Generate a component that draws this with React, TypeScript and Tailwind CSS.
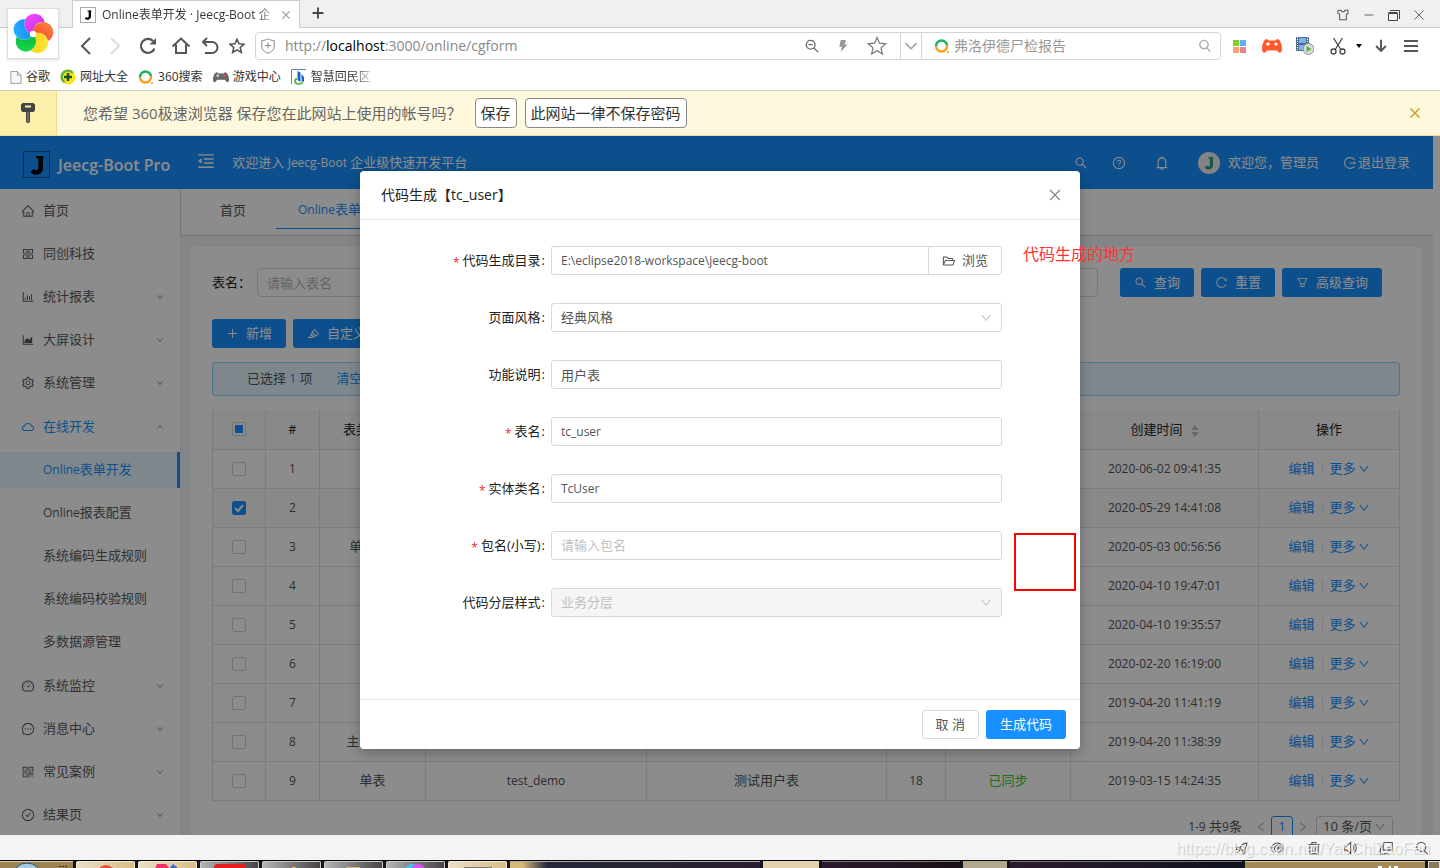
import React from "react";
import {
  AiOutlineAppstore,
  AiOutlineAreaChart,
  AiOutlineBarChart,
  AiOutlineBell,
  AiOutlineCheckCircle,
  AiOutlineClose,
  AiOutlineCloud,
  AiOutlineDashboard,
  AiOutlineDown,
  AiOutlineFilter,
  AiOutlineFolderOpen,
  AiOutlineHighlight,
  AiOutlineHome,
  AiOutlineLeft,
  AiOutlineLogout,
  AiOutlineMenuFold,
  AiOutlineMessage,
  AiOutlinePlus,
  AiOutlineQrcode,
  AiOutlineQuestionCircle,
  AiOutlineReload,
  AiOutlineRight,
  AiOutlineSearch,
  AiOutlineSetting,
  AiOutlineSkin,
  AiOutlineUp,
} from "react-icons/ai";

type IconType = React.ComponentType<{ className?: string }>;

/* ---------- browser chrome ---------- */

function Stroke({
  d,
  size = "size-5",
  color = "text-[#555]",
  width = 2,
}: {
  d: string;
  size?: string;
  color?: string;
  width?: number;
}) {
  return (
    <svg viewBox="0 0 20 20" className={`${size} ${color} shrink-0`} fill="none" stroke="currentColor" strokeWidth={width}>
      <path d={d} />
    </svg>
  );
}

const STAR = "M10 1.500l2.500 5.700 6.200.6-4.700 4.100 1.400 6.100L10 14.800l-5.400 3.200L6 11.900 1.300 7.800l6.200-.6z";

function PinwheelLogo() {
  const petals = [
    { id: "top", from: "#ff4bff", to: "#b52ee0", angle: 8 },
    { id: "right", from: "#ff8a3c", to: "#f0402c", angle: 80 },
    { id: "bottom", from: "#ffef3a", to: "#f8c414", angle: 152 },
    { id: "lower", from: "#18e04f", to: "#08a83c", angle: 224 },
    { id: "upper", from: "#22b8ff", to: "#1a7df0", angle: 296 },
  ];
  return (
    <svg viewBox="-21 -21 42 42" className="size-[42px]">
      <defs>
        {petals.map((p) => (
          <linearGradient key={p.id} id={`petal-${p.id}`} x1="0" y1="0" x2="1" y2="1">
            <stop offset="0" stopColor={p.from} />
            <stop offset="1" stopColor={p.to} />
          </linearGradient>
        ))}
      </defs>
      {petals.map((p) => (
        <path
          key={p.id}
          fill={`url(#petal-${p.id})`}
          transform={`rotate(${p.angle})`}
          d="M0 0A10.200 10.200 0 1 1 9.700 -13.350A10.200 10.200 0 0 0 0 0Z"
        />
      ))}
      <circle r="3.200" fill="#fff" />
    </svg>
  );
}

function JMark({ className }: { className?: string }) {
  return (
    <svg viewBox="0 0 26 26" className={className} fill="none" stroke="currentColor">
      <path d="M12 4.500h8" strokeWidth="2.500" />
      <path d="M17 4v12.500c0 4.500-6 6-9.500 2.500" strokeWidth="5" />
    </svg>
  );
}

function RingLogo({ className }: { className?: string }) {
  return (
    <svg viewBox="0 0 16 16" className={className} fill="none" strokeWidth="2.500">
      <path d="M2 8.500a5.500 5.500 0 0 1 11-1" stroke="#1bb35c" />
      <path d="M2 8.500a5.500 5.500 0 0 0 11-1" stroke="#f6a21c" />
      <circle cx="14" cy="14" r="1" fill="#f6a21c" />
    </svg>
  );
}

function TabStrip() {
  return (
    <div className="flex h-7 items-end border-b border-[#ccc] bg-[#f0f0f0] pl-[72px]">
      <div className="-mb-px flex h-7 w-[228px] items-center border border-b-0 border-[#ccc] bg-white pl-[7px]">
        <span className="flex size-4 shrink-0 items-center justify-center border border-[#aaa]">
          <JMark className="size-3 text-black" />
        </span>
        <span className="ml-1.5 w-[174px] overflow-hidden bg-linear-to-r from-[#333] from-90% to-transparent bg-clip-text text-xs whitespace-nowrap text-transparent">
          Online表单开发 · Jeecg-Boot 企
        </span>
        <button aria-label="关闭标签页" className="ml-1">
          <Stroke d="M4 4l12 12M16 4L4 16" size="size-3" color="text-[#999]" width={2} />
        </button>
      </div>
      <button aria-label="新标签页" className="mb-2 ml-3">
        <Stroke d="M10 1v18M1 10h18" size="size-3" color="text-[#444]" width={3} />
      </button>
      <div className="mb-[5px] ml-auto flex items-center gap-[14px] pr-4 text-[#555]">
        <AiOutlineSkin className="size-3.5" />
        <Stroke d="M1 10h18" size="size-2.5" color="text-[#666]" />
        <svg viewBox="0 0 12 12" className="size-3" fill="none" stroke="#444">
          <path d="M.5 4.500h9v7h-9zM.5 3.500h9M2 1.500h9.500V10" />
        </svg>
        <Stroke d="M1 1l18 18M19 1L1 19" size="size-2.5" color="text-[#666]" />
      </div>
    </div>
  );
}

function Toolbar() {
  return (
    <div className="flex h-9 items-center pr-[22px] pl-[76px]">
      <div className="flex items-center gap-[9px]">
        <button aria-label="后退"><Stroke d="M14 2l-8 8 8 8" size="size-5" /></button>
        <button aria-label="前进"><Stroke d="M6 2l8 8-8 8" size="size-5" color="text-[#ddd]" /></button>
        <button aria-label="刷新" className="ml-1">
          <svg viewBox="0 0 20 20" className="size-5" fill="none" stroke="#555" strokeWidth="2.200">
            <path d="M16.500 12.500A7 7 0 1 1 15 5" />
            <path d="M18 2v6.500h-6.500z" fill="#555" stroke="none" />
          </svg>
        </button>
        <button aria-label="主页" className="ml-1"><Stroke d="M1.500 10.500L10 2.500l8.500 8M5 8.500V17h10V8.500" /></button>
        <button aria-label="恢复"><Stroke d="M7 2L3 6l4 4M3 6h9a5.500 5.500 0 0 1 0 11H5" /></button>
        <button aria-label="收藏"><Stroke d={STAR} size="size-4" /></button>
      </div>
      <div className="ml-2.5 flex h-7 flex-1 items-center rounded-sm border border-[#d5d5d5]">
        <svg viewBox="0 0 16 16" className="ml-1 size-4 shrink-0" fill="none" stroke="#888">
          <path d="M8 .8C6 2 4 2.500 1.800 2.500V8c0 4 3 6 6.200 7.300C11.200 14 14.200 12 14.200 8V2.500C12 2.500 10 2 8 .8zM8 4.500v6M5 7.500h6" />
        </svg>
        <span className="ml-[9px] text-sm text-[#888]">
          http://<span className="text-black">localhost</span>:3000/online/cgform
        </span>
        <span className="ml-auto flex items-center gap-[18px] pr-[13px]">
          <svg viewBox="0 0 16 16" className="size-3.5" fill="none" stroke="#666" strokeWidth="1.500">
            <path d="M6.500 1.500a5 5 0 1 1 0 10 5 5 0 0 1 0-10M10.200 10.200l4.800 4.800M4 6.500h5" />
          </svg>
          <svg viewBox="0 0 16 16" className="size-3" fill="#999"><path d="M5 0h7L10 6h4L5 16l1.500-7H3z" /></svg>
          <Stroke d={STAR} size="size-5" color="text-[#777]" width={1.2} />
        </span>
        <span className="flex h-full w-[22px] items-center justify-center border-x border-[#d5d5d5]">
          <Stroke d="M2 6l8 8 8-8" size="size-3.5" color="text-[#aaa]" width={2.5} />
        </span>
        <RingLogo className="ml-3 size-4 shrink-0" />
        <input
          aria-label="搜索"
          placeholder="弗洛伊德尸检报告"
          className="ml-1 w-60 min-w-0 text-sm outline-none placeholder:text-[#999]"
        />
        <span className="mr-2 ml-1">
          <Stroke d="M8.500 2a6 6 0 1 1 0 12 6 6 0 0 1 0-12M13 13l4.500 5" size="size-3.5" color="text-[#aaa]" />
        </span>
      </div>
      <div className="ml-3 flex items-center">
        <span className="grid size-[13px] grid-cols-2 gap-px">
          <i className="bg-[#7ed321]" /><i className="bg-[#5bb0ff]" /><i className="bg-[#ffa270]" /><i className="bg-[#f08090]" />
        </span>
        <svg viewBox="0 0 20 16" className="ml-4 h-4 w-5">
          <path fill="#ff5a2c" d="M5 1l2 1.500h6L15 1c3 0 5 5 5 10 0 4-3 5-5 1.500H5C3 16 0 15 0 11 0 6 2 1 5 1z" />
          <path d="M6 4v4M4 6h4" stroke="#fff" strokeWidth="1.300" />
          <circle cx="14" cy="6" r="1.500" fill="#fff" />
        </svg>
        <svg viewBox="0 0 18 18" className="ml-3.5 size-[18px]">
          <path fill="#4d6a8c" d="M0 0h13v14H0z" />
          <path fill="#7fb2e8" d="M3 1h7v5H3zM3 8h7v5H3z" />
          <path stroke="#fff" strokeDasharray="1 1" d="M1.500 0v14M11.500 0v14" />
          <circle cx="12.500" cy="12" r="5.500" fill="#d5dade" stroke="#8a9299" />
          <path fill="#5ab031" d="M10.500 9v6l5-3z" />
        </svg>
        <svg viewBox="0 0 16 18" className="ml-4 h-[18px] w-4" fill="none" stroke="#444" strokeWidth="1.300">
          <path d="M3.500 1l7 11M12.500 1l-7 11" />
          <circle cx="3.500" cy="14.500" r="2.500" /><circle cx="12.500" cy="14.500" r="2.500" />
        </svg>
        <svg viewBox="0 0 6 4" className="ml-2.5 h-1 w-1.5"><path d="M0 0h6L3 4z" /></svg>
        <span className="ml-3"><Stroke d="M10 1v16M3 10l7 7 7-7" size="size-3.5" width={2.8} /></span>
        <span className="ml-4"><Stroke d="M0 3h20M0 10h20M0 17h20" size="size-3.5" width={2.8} /></span>
      </div>
    </div>
  );
}

function Bookmarks() {
  const link = "flex items-center gap-1 text-xs text-[#333]";
  return (
    <nav className="flex h-[27px] items-center gap-2.5 border-b border-[#ccc] pl-2.5">
      <a href="#" className={link}>
        <svg viewBox="0 0 12 14" className="h-[13px] w-3" fill="#f6f6f6" stroke="#999">
          <path d="M.5.5h7l4 4v9H.5zM7.500.5v4h4" />
        </svg>
        谷歌
      </a>
      <a href="#" className={link}>
        <svg viewBox="0 0 16 16" className="size-4">
          <circle cx="8" cy="8" r="7.500" fill="#ffe11a" /><path d="M.5 8a7.500 7.500 0 0 1 13-5L4 14A7.500 7.500 0 0 1 .5 8z" fill="#5cb531" />
          <circle cx="8" cy="8" r="5.200" fill="#ffe11a" /><path d="M8 4v8M4 8h8" stroke="#14532d" strokeWidth="2.600" />
        </svg>
        网址大全
      </a>
      <a href="#" className={link}><RingLogo className="size-4" />360搜索</a>
      <a href="#" className={link}>
        <svg viewBox="0 0 20 16" className="size-4">
          <path fill="#666" d="M5 2l2 1.500h6L15 2c3 0 5 5 5 9 0 4-3 5-5 .5H5C3 16 0 15 0 11 0 7 2 2 5 2z" />
          <path d="M6 4.500v4M4 6.500h4" stroke="#b9f2c0" strokeWidth="1.300" /><circle cx="14" cy="6.500" r="1.800" fill="#e05050" />
        </svg>
        游戏中心
      </a>
      <a href="#" className={link}>
        <svg viewBox="0 0 16 16" className="size-4">
          <path d="M.5 15V.5H15" stroke="#5a84b8" fill="none" /><path fill="#1b63c4" d="M6.500 2l3 1.500V13l-3-2zM10.500 5l2.500 3v5l-2.500-1z" />
          <path d="M12 13.500c-4 2.500-8 1.500-8-1.500 0-1 1-2 2-2" stroke="#57b947" strokeWidth="1.800" fill="none" />
        </svg>
        <span className="bg-linear-to-r from-[#333] from-70% to-[#ddd] bg-clip-text text-transparent">智慧回民区</span>
      </a>
    </nav>
  );
}

function PasswordBar() {
  const btn = "ml-2 h-[30px] rounded-sm border border-[#888] bg-white px-[5px] text-[15px] text-[#333]";
  return (
    <div className="flex h-[45px] items-center border-b border-[#eedf9a] bg-[#fef8dc]">
      <span className="flex h-full w-[57px] items-center justify-center border-r border-[#f2dc8c] bg-[#fcf0ab]">
        <svg viewBox="0 0 14 20" className="h-5 w-3.5">
          <path fill="#444" d="M1.500 0h11L14 1.500v6L12.500 9H9v9.500L8 20H6l-1-1.500V9H1.500L0 7.500v-6z" /><path fill="#fcf0ab" d="M4 2.500h6v2H4z" />
          <path stroke="#999" d="M7 9v10" />
        </svg>
      </span>
      <span className="mr-[5px] ml-[26px] text-[15px] text-[#666]">您希望 360极速浏览器 保存您在此网站上使用的帐号吗？</span>
      <button className={btn}>保存</button>
      <button className={btn}>此网站一律不保存密码</button>
      <button aria-label="关闭提示" className="mr-5 ml-auto">
        <Stroke d="M1 1l18 18M19 1L1 19" size="size-2.5" color="text-[#c8961e]" width={2.5} />
      </button>
    </div>
  );
}

/* ---------- application page ---------- */

function AppHeader() {
  return (
    <header className="flex h-[53px] items-center bg-[#1890ff] pr-[23px] pl-[23px] text-[13px] text-white">
      <span className="mt-1 flex size-[27px] items-center justify-center border border-[#175491]">
        <JMark className="size-6 text-black" />
      </span>
      <h1 className="mt-1 ml-2 text-base font-semibold">Jeecg-Boot Pro</h1>
      <AiOutlineMenuFold className="mb-1 ml-[26px] size-5" />
      <span className="ml-4">欢迎进入 <span className="text-xs">Jeecg-Boot</span> 企业级快速开发平台</span>
      <div className="ml-auto flex items-center">
        <AiOutlineSearch className="size-3.5" />
        <AiOutlineQuestionCircle className="ml-6 size-3.5" />
        <AiOutlineBell className="ml-7 size-4" />
        <span className="ml-7 flex size-[22px] items-center justify-center rounded-full bg-[#eee]">
          <JMark className="size-4 text-[#27a58c]" />
        </span>
        <span className="ml-2">欢迎您，管理员</span>
        <a href="#" className="ml-6 flex items-center gap-px">
          <AiOutlineLogout className="size-3.5" />退出登录
        </a>
      </div>
    </header>
  );
}

function NavItem({ icon: Icon, label, arrow, active }: { icon: IconType; label: string; arrow?: "up" | "down"; active?: boolean }) {
  return (
    <a href="#" className={`flex h-9 items-center gap-2 pr-4 pl-[21px] ${active ? "text-[#1890ff]" : "text-[#5a5a5a]"}`}>
      <Icon className="size-3.5" />
      {label}
      {arrow === "down" && <AiOutlineDown className="ml-auto size-2 text-[#888]" />}
      {arrow === "up" && <AiOutlineUp className="ml-auto size-2 text-[#888]" />}
    </a>
  );
}

function Sidebar() {
  const sub = ["系统编码生成规则", "系统编码校验规则", "多数据源管理"];
  return (
    <aside className="flex w-[180px] shrink-0 flex-col gap-[7px] bg-white pt-1 text-[13px]">
      <NavItem icon={AiOutlineHome} label="首页" />
      <NavItem icon={AiOutlineAppstore} label="同创科技" />
      <NavItem icon={AiOutlineBarChart} label="统计报表" arrow="down" />
      <NavItem icon={AiOutlineAreaChart} label="大屏设计" arrow="down" />
      <NavItem icon={AiOutlineSetting} label="系统管理" arrow="down" />
      <div className="flex flex-col gap-[7px] py-px">
        <NavItem icon={AiOutlineCloud} label="在线开发" arrow="up" active />
        <a href="#" className="flex h-9 items-center border-r-[3px] border-[#1890ff] bg-[#e6f7ff] pl-[43px] text-[#1890ff]">
          <span><span className="text-xs">Online</span>表单开发</span>
        </a>
        <a href="#" className="flex h-9 items-center pl-[43px] text-[#5a5a5a]">
          <span><span className="text-xs">Online</span>报表配置</span>
        </a>
        {sub.map((s) => (
          <a key={s} href="#" className="flex h-9 items-center pl-[43px] text-[#5a5a5a]">{s}</a>
        ))}
      </div>
      <NavItem icon={AiOutlineDashboard} label="系统监控" arrow="down" />
      <NavItem icon={AiOutlineMessage} label="消息中心" arrow="down" />
      <NavItem icon={AiOutlineQrcode} label="常见案例" arrow="down" />
      <NavItem icon={AiOutlineCheckCircle} label="结果页" arrow="down" />
    </aside>
  );
}

function PrimaryButton({ icon: Icon, children }: { icon?: IconType; children: React.ReactNode }) {
  return (
    <button className="flex h-[29px] items-center gap-[7px] rounded-[3px] bg-[#1890ff] px-3.5 text-[13px] whitespace-nowrap text-white">
      {Icon && <Icon className="size-[13px]" />}
      {children}
    </button>
  );
}

function Check({ label, state }: { label: string; state: "on" | "off" | "partial" }) {
  return (
    <label className="mx-auto grid w-3.5 place-items-center">
      <input
        type="checkbox"
        aria-label={label}
        defaultChecked={state === "on"}
        className="col-start-1 row-start-1 size-3.5 appearance-none rounded-xs border border-[#d0d0d0] bg-white checked:border-[#1890ff] checked:bg-[#1890ff]"
      />
      {state === "on" && (
        <svg viewBox="0 0 14 14" className="col-start-1 row-start-1 size-3.5" fill="none" stroke="#fff" strokeWidth="2">
          <path d="M3 7l3 3 5-6" />
        </svg>
      )}
      {state === "partial" && <span className="col-start-1 row-start-1 size-2 bg-[#1890ff]" />}
    </label>
  );
}

type Row = { kind?: string; name?: string; desc?: string; version?: string; status?: string; created: string };

const rows: Row[] = [
  { created: "2020-06-02 09:41:35" },
  { created: "2020-05-29 14:41:08" },
  { kind: "单表(树)", created: "2020-05-03 00:56:56" },
  { created: "2020-04-10 19:47:01" },
  { created: "2020-04-10 19:35:57" },
  { created: "2020-02-20 16:19:00" },
  { created: "2019-04-20 11:41:19" },
  { kind: "主表单表", created: "2019-04-20 11:38:39" },
  { kind: "单表", name: "test_demo", desc: "测试用户表", version: "18", status: "已同步", created: "2019-03-15 14:24:35" },
];

function DataTable() {
  const head = "border border-t-0 border-[#e2e2e2] p-0 font-normal";
  const cell = "border border-[#e2e2e2] p-0";
  return (
    <table className="mt-3.5 w-full table-fixed border-collapse text-center text-[13px] text-[#555]">
      <colgroup>
        <col className="w-[53px]" />
        <col className="w-[54px]" />
        <col className="w-[106px]" />
        <col className="w-[221px]" />
        <col />
        <col className="w-[59px]" />
        <col className="w-[125px]" />
        <col className="w-[188px]" />
        <col className="w-[141px]" />
      </colgroup>
      <thead>
        <tr className="h-[39px] bg-[#fafafa] text-[#222]">
          <th className={head}><Check label="全选" state="partial" /></th>
          <th className={head}><span className="text-xs font-medium">#</span></th>
          <th className={head}><span className="pr-5">表类型</span></th>
          <th className={head} />
          <th className={head} />
          <th className={head} />
          <th className={head} />
          <th className={head}>
            <span className="inline-flex items-center gap-2">
              创建时间
              <svg viewBox="0 0 8 12" className="mt-1 h-3 w-2" fill="#bfbfbf"><path d="M0 5h8L4 0zM0 7h8l-4 5z" /></svg>
            </span>
          </th>
          <th className={head}>操作</th>
        </tr>
      </thead>
      <tbody>
        {rows.map((r, i) => (
          <tr key={r.created} className={i === 1 ? "h-[39px] bg-[#fafafa]" : "h-[39px]"}>
            <td className={cell}><Check label={`选择第 ${i + 1} 行`} state={i === 1 ? "on" : "off"} /></td>
            <td className={`${cell} text-xs`}>{i + 1}</td>
            <td className={cell}>{r.kind}</td>
            <td className={`${cell} text-xs`}>{r.name}</td>
            <td className={cell}>{r.desc}</td>
            <td className={`${cell} text-xs`}>{r.version}</td>
            <td className={`${cell} text-[#32cd32]`}>{r.status}</td>
            <td className={`${cell} text-xs`}>{r.created}</td>
            <td className={cell}>
              <span className="flex items-center justify-center text-[#1890ff]">
                <a href="#">编辑</a>
                <span className="mx-[7px] h-3 w-px bg-[#e2e2e2]" />
                <a href="#" className="flex items-center gap-0.5">更多<AiOutlineDown className="size-3" /></a>
              </span>
            </td>
          </tr>
        ))}
      </tbody>
    </table>
  );
}

function Content() {
  return (
    <main className="flex min-w-0 flex-1 flex-col bg-[#f0f2f5]">
      <div className="flex h-[47px] shrink-0 items-start gap-2 border-b border-l border-[#d4d4d4] bg-white pl-[17px] text-[13px]">
        <a href="#" className="flex h-10 items-center px-[22px] pt-[3px] text-[#555]">首页</a>
        <a href="#" className="flex h-10 items-center border-b border-[#1890ff] px-[22px] pt-[3px] text-[#1890ff]">
          <span><span className="text-xs">Online</span>表单开发</span>
        </a>
      </div>
      <div className="mx-[11px] mt-[11px] flex-1 rounded-t-sm bg-white pt-[21px] pr-[22px] pl-[21px]">
        <div className="flex items-center text-[13px]">
          <label htmlFor="filter-name" className="w-[45px] text-[#222]">表名：</label>
          <input
            id="filter-name"
            placeholder="请输入表名"
            className="h-[29px] min-w-0 flex-1 rounded-sm border border-[#d9d9d9] px-[9px] placeholder:text-[#b5b5b5]"
          />
          <div className="mr-[18px] ml-[22px] flex gap-[7px]">
            <PrimaryButton icon={AiOutlineSearch}>查询</PrimaryButton>
            <PrimaryButton icon={AiOutlineReload}>重置</PrimaryButton>
            <PrimaryButton icon={AiOutlineFilter}>高级查询</PrimaryButton>
          </div>
        </div>
        <div className="mt-[22px] flex gap-[7px]">
          <PrimaryButton icon={AiOutlinePlus}>新增</PrimaryButton>
          <PrimaryButton icon={AiOutlineHighlight}>自定义按钮</PrimaryButton>
        </div>
        <div className="mt-3.5 flex h-[34px] items-center rounded-[3px] border border-[#91d5ff] bg-[#e6f7ff] pl-[34px] text-[13px] text-[#555]">
          已选择<span className="mx-[3px] font-medium text-[#1890ff]">1</span>项
          <a href="#" className="ml-6 text-[#1890ff]">清空</a>
        </div>
        <DataTable />
        <div className="mt-[15px] mr-[7px] flex h-[22px] items-center justify-end text-[13px] text-[#555]">
          <span className="mr-[13px]"><span className="text-xs">1-9</span> 共<span className="text-xs">9</span>条</span>
          <button aria-label="上一页"><AiOutlineLeft className="size-3 text-[#aaa]" /></button>
          <button className="mx-1 flex size-[22px] items-center justify-center rounded-[3px] border border-[#1890ff] text-[#1890ff]">1</button>
          <button aria-label="下一页"><AiOutlineRight className="size-3 text-[#aaa]" /></button>
          <span className="ml-[7px] grid w-[77px] items-center">
            <select aria-label="每页条数" className="col-start-1 row-start-1 h-[22px] appearance-none rounded-[3px] border border-[#d0d0d0] px-1.5 text-[13px]">
              <option>10 条/页</option>
            </select>
            <AiOutlineDown className="pointer-events-none col-start-1 row-start-1 mr-[7px] size-3 justify-self-end text-[#aaa]" />
          </span>
        </div>
      </div>
    </main>
  );
}

/* ---------- dialog ---------- */

const FIELD = "h-[29px] w-full rounded-[3px] border border-[#d9d9d9] bg-white px-[9px] text-xs text-[#555] placeholder:text-[13px] placeholder:text-[#bfbfbf]";

function Field({ id, label, required, children }: { id: string; label: string; required?: boolean; children: React.ReactNode }) {
  return (
    <div className="grid grid-cols-[185px_1fr] items-center gap-1.5">
      <label htmlFor={id} className="flex items-center justify-end gap-[3px] text-[13px] text-[#222]">
        {required && <span className="mt-1 text-xs leading-3 text-[#f5222d]">*</span>}
        <span>{label}<span className="ml-px">:</span></span>
      </label>
      {children}
    </div>
  );
}

function SelectField({ id, value, disabled }: { id: string; value: string; disabled?: boolean }) {
  return (
    <span className="grid items-center">
      <select
        id={id}
        disabled={disabled}
        className="col-start-1 row-start-1 h-[29px] w-full appearance-none rounded-[3px] border border-[#d9d9d9] bg-white px-[9px] text-[13px] text-[#555] disabled:bg-[#f5f5f5] disabled:text-[#bfbfbf] disabled:opacity-100"
      >
        <option>{value}</option>
      </select>
      <AiOutlineDown className="pointer-events-none col-start-1 row-start-1 mr-2.5 size-3 justify-self-end text-[#bfbfbf]" />
    </span>
  );
}

function Dialog() {
  return (
    <div className="absolute inset-0 flex items-start justify-center bg-black/45 pt-[35px]">
      <section role="dialog" aria-labelledby="dialog-title" className="relative w-[720px] rounded-sm bg-white shadow-[0_4px_12px_rgba(0,0,0,0.25)]">
        <div className="flex h-[49px] items-center justify-between border-b border-[#e8e8e8] pr-[17px] pl-[21px]">
          <h2 id="dialog-title" className="text-sm text-[#222]">代码生成【<span className="font-medium">tc_user</span>】</h2>
          <button aria-label="关闭"><AiOutlineClose className="size-4 text-[#888]" /></button>
        </div>
        <form className="flex flex-col gap-7 pt-[26px] pr-[78px] pb-[82px]">
          <Field id="path" label="代码生成目录" required>
            <span className="flex">
              <input id="path" defaultValue={"E:\\eclipse2018-workspace\\jeecg-boot"} className={`${FIELD} flex-1 rounded-r-none border-r-0`} />
              <button type="button" className="flex h-[29px] w-[74px] shrink-0 items-center justify-center gap-1.5 rounded-r-[3px] border border-[#d9d9d9] text-[13px] text-[#555]">
                <AiOutlineFolderOpen className="size-3.5" />浏览
              </button>
            </span>
          </Field>
          <Field id="style" label="页面风格"><SelectField id="style" value="经典风格" /></Field>
          <Field id="desc" label="功能说明"><input id="desc" defaultValue="用户表" className={`${FIELD} text-[13px]`} /></Field>
          <Field id="table" label="表名" required><input id="table" defaultValue="tc_user" className={FIELD} /></Field>
          <Field id="entity" label="实体类名" required><input id="entity" defaultValue="TcUser" className={FIELD} /></Field>
          <Field id="package" label="包名(小写)" required><input id="package" placeholder="请输入包名" className={FIELD} /></Field>
          <Field id="layer" label="代码分层样式"><SelectField id="layer" value="业务分层" disabled /></Field>
        </form>
        <div className="flex h-[50px] items-center justify-end gap-[7px] border-t border-[#e8e8e8] pr-3.5">
          <button className="h-[29px] rounded-[3px] border border-[#d9d9d9] px-[13px] text-[13px] text-[#555]">取 消</button>
          <PrimaryButton>生成代码</PrimaryButton>
        </div>
        <span className="absolute top-[71px] left-[663px] text-base whitespace-nowrap text-[#ff3333]">代码生成的地方</span>
        <span className="absolute top-[362px] left-[654px] h-[58px] w-[62px] border-2 border-[#ff0000]" />
      </section>
    </div>
  );
}

/* ---------- status bar and desktop taskbar ---------- */

function StatusBar() {
  const icons = [
    "M17 3c-5 0-8 3-10 7l4 4c4-2 6-6 6-11zM7 9H3l-1 3h4M11 14v4l3-1v-5M3 17l4-4M12 8h1",
    "M4 17a8 8 0 1 1 10 0M10 17c5-2 6-6 4-9s-6-3-8 0-1 7 3 7M10 7v6M7 10h6",
    "M2 5h16M7 5V2h6v3M4 5v13h12V5M8 8v7M12 8v7",
    "M2 7h3l6-5v16l-6-5H2zM14 6c2 2 2 6 0 8M16 3c4 4 4 10 0 14",
    "M6 2h13v11H6zM2 6v12h12M12 10h4",
    "M9 2a6.500 6.500 0 1 1 0 13 6.500 6.500 0 0 1 0-13M13.500 14l5 5",
  ];
  return (
    <div className="relative flex h-[25px] items-center justify-end gap-[22px] bg-[#f4f4f4] pr-[11px]">
      {icons.map((d) => (
        <Stroke key={d} d={d} size="size-3.5" color="text-[#555]" width={1.5} />
      ))}
      <span className="absolute top-0.5 right-2.5 font-['Liberation_Sans',sans-serif] text-base leading-6 whitespace-nowrap text-white/70 [text-shadow:1px_1px_1px_rgba(0,0,0,0.2)]">
        https://blog.csdn.net/YaoChiZaoFan
      </span>
    </div>
  );
}

function Taskbar() {
  const light = "flex w-[59px] justify-center overflow-hidden rounded-t-xs border border-b-0 border-[#f7ecd6] bg-linear-to-r from-[#eadfc8] to-[#d9bd86]";
  const dark = "flex w-[59px] justify-center overflow-hidden rounded-t-xs border border-b-0 border-[#ccc] bg-linear-to-r from-[#b5b5b5] to-[#4a4448]";
  return (
    <footer className="flex h-2 gap-[3px] overflow-hidden border-t border-black bg-[#14141c]">
      <div className="flex w-[73px] justify-center border-t border-[#e0cfa5] bg-[#9c8251]">
        <svg viewBox="0 0 64 7" className="h-[7px] w-16">
          <ellipse cx="22" cy="14" rx="14" ry="13" fill="#a9cbe2" stroke="#1d4f7c" />
          <path d="M54 4h2v1h-2zM57 4h2v1h-2zM60 4h2v1h-2z" fill="#333" />
        </svg>
      </div>
      <div className={light}><svg viewBox="0 0 20 7" className="h-[7px] w-5"><circle cx="10" cy="12" r="9" fill="#e2513d" /></svg></div>
      <div className={light}>
        <svg viewBox="0 0 28 7" className="h-[7px] w-7"><path d="M3 2h9l4 5H1z" fill="#f4306a" /><path d="M19 2l6 5H15z" fill="#3d66d8" /></svg>
      </div>
      <div className={dark}><svg viewBox="0 0 32 7" className="h-[7px] w-8"><rect y="2" width="32" height="10" rx="4" fill="#e81c1c" /></svg></div>
      <div className={dark}><svg viewBox="0 0 20 7" className="h-[7px] w-5"><circle cx="12" cy="8" r="3" fill="#f2cf3c" /></svg></div>
      <div className={dark}><svg viewBox="0 0 20 7" className="h-[7px] w-5"><path d="M2 5h14v3H2z" fill="#d8b86a" /></svg></div>
      <div className={dark}>
        <svg viewBox="0 0 24 7" className="h-[7px] w-6"><circle cx="8" cy="9" r="7" fill="#38c8f2" /><circle cx="14" cy="9" r="7" fill="#e04ff5" /></svg>
      </div>
      <div className={light}><svg viewBox="0 0 28 7" className="h-[7px] w-7"><path d="M0 5h28v3H0z" fill="#777" /></svg></div>
      <div className="flex-1 border-t border-[#aaa] bg-linear-to-r from-[#d8b878] from-5% via-[#232838] via-15% to-[#2a1c30]" />
      <div className="w-14 bg-[#e4d2ac]" />
      <div className="w-[138px] border-t border-[#777] bg-linear-to-r from-[#2b1a2e] to-[#1a1018]" />
      <div className="w-11 bg-[#b3a78e]" />
      <div className="w-[232px] border-t border-[#777] bg-linear-to-r from-[#2b1a2e] to-[#10131e]" />
      <div className="flex w-[180px] justify-end border-t border-[#e0cfa5] bg-[#a48a58]">
        <svg viewBox="0 0 24 7" className="mr-6 h-[7px] w-6" fill="#fff"><path d="M1 4h4v2H1zM12 4h2v2h-2zM17 4h4v2h-4z" /></svg>
      </div>
      <div className="w-3 border border-b-0 border-[#ddd] bg-[#8a7a5c]" />
    </footer>
  );
}

export default function App() {
  return (
    <div className="relative flex h-screen flex-col overflow-hidden bg-white font-['Open_Sans','Noto_Sans_CJK_SC',sans-serif]">
      <TabStrip />
      <Toolbar />
      <Bookmarks />
      <div className="absolute top-2 left-[7px] flex h-[51px] w-[52px] items-center justify-center border border-[#ddd] bg-white shadow">
        <PinwheelLogo />
      </div>
      <PasswordBar />
      <div className="relative flex min-h-0 flex-1 flex-col overflow-hidden pr-[7px]">
        <AppHeader />
        <div className="flex min-h-0 flex-1">
          <Sidebar />
          <Content />
        </div>
        <Dialog />
      </div>
      <StatusBar />
      <Taskbar />
    </div>
  );
}
